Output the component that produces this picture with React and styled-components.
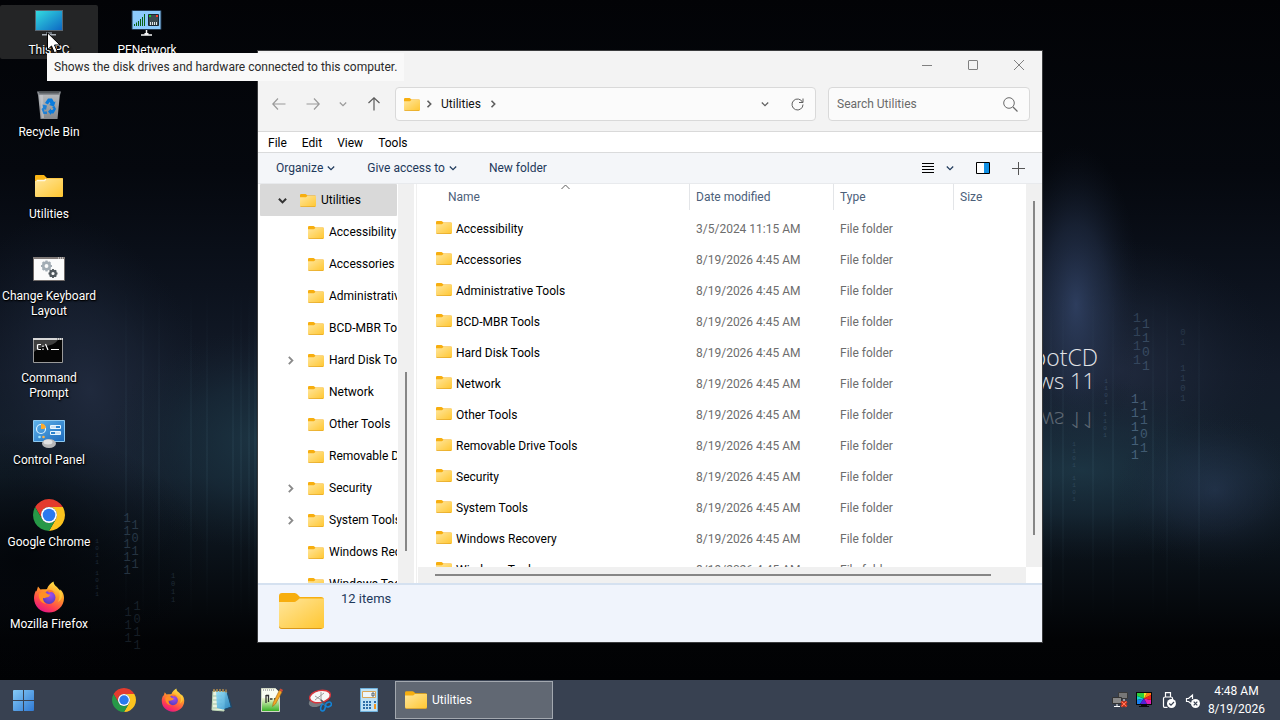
import React from "react";
import styled, { createGlobalStyle } from "styled-components";

const colours = {
    chrome: "#f3f3f3",
    field: "#fbfbfb",
    border: "#d9d9d9",
    command: "#f4f6f9",
    link: "#1e395b",
    heading: "#4c607a",
    muted: "#6d6d6d",
    track: "#f0f0f0",
    thumb: "#868686",
    selected: "#d9d9d9",
    taskbar: "#384151",
};

const GlobalStyle = createGlobalStyle`
    * {
        box-sizing: border-box;
    }
    body {
        margin: 0;
        background: #000;
        font-family: Roboto, "Open Sans", sans-serif;
        font-size: 12px;
        line-height: 16px;
        color: #000;
    }
    button, input {
        font: inherit;
        color: inherit;
    }
    button {
        padding: 0;
        border: 0;
        background: none;
    }
    svg {
        display: block;
        flex: none;
    }
`;

/* ---------- desktop ---------- */

const Screen = styled.div`
    display: flex;
    flex-direction: column;
    height: 100vh;
    overflow: hidden;
`;

const Desktop = styled.main`
    position: relative;
    flex: 1;
    min-height: 0;
`;

const WallpaperSvg = styled.svg`
    position: absolute;
    inset: 0;
    width: 100%;
    height: 100%;
`;

const IconGrid = styled.div`
    position: relative;
    display: grid;
    grid-auto-flow: column;
    grid-template-rows: repeat(8, 82px);
    grid-auto-columns: 98px;
    justify-content: start;
    height: 100%;
    padding-top: 5px;
`;

const Shortcut = styled.button`
    display: flex;
    flex-direction: column;
    align-items: center;
    align-self: start;
    min-height: 54px;
    padding-top: 2px;
    border-radius: 2px;
    background: ${({ $hovered }) => ($hovered ? "#242526" : "none")};
    color: #fff;
    line-height: 15px;
    text-shadow: 1px 1px 2px #000, 0 1px 1px #000;

    svg {
        margin-bottom: 4px;
    }
`;

const Pointer = styled.svg`
    position: absolute;
    top: 32px;
    left: 47px;
`;

const Tooltip = styled.div`
    position: absolute;
    top: 53px;
    left: 47px;
    padding: 6px 7px;
    background: #f9f9f9;
    color: #2b2b2b;
    white-space: nowrap;
`;

/* ---------- explorer window ---------- */

const Window = styled.section`
    position: absolute;
    top: 50px;
    right: 237px;
    bottom: 37px;
    left: 257px;
    display: flex;
    flex-direction: column;
    border: 1px solid #3a3b3d;
    background: #fff;
`;

const TitleBar = styled.header`
    display: flex;
    justify-content: flex-end;
    height: 28px;
    background: ${colours.chrome};
`;

const CaptionButton = styled.button`
    display: flex;
    align-items: center;
    justify-content: center;
    width: 46px;
    height: 28px;
    color: #808080;
`;

const NavBar = styled.div`
    display: flex;
    align-items: center;
    gap: 12px;
    height: 53px;
    padding: 2px 12px 4px;
    border-bottom: 1px solid ${colours.border};
    background: ${colours.chrome};
    color: #9a9a9a;
`;

const NavButtons = styled.div`
    display: flex;
    align-items: center;
    justify-content: space-between;
    width: 113px;
    padding: 0 2px;
`;

const AddressBar = styled.div`
    display: flex;
    flex: 1;
    align-items: center;
    height: 34px;
    padding: 0 11px 0 8px;
    border: 1px solid ${colours.border};
    border-radius: 4px;
    background: ${colours.field};
    color: #5f5f5f;
`;

const Crumbs = styled.div`
    display: flex;
    flex: 1;
    align-items: center;
    gap: 5px;
`;

const Crumb = styled.button`
    padding: 0 3px;
    color: #111;
`;

const AddressActions = styled.div`
    display: flex;
    align-items: center;
    gap: 22px;
`;

const SearchBox = styled.label`
    display: flex;
    align-items: center;
    width: 202px;
    height: 34px;
    padding: 0 11px 0 8px;
    border: 1px solid ${colours.border};
    border-radius: 4px;
    background: ${colours.field};
    color: #6a6a6a;
`;

const SearchInput = styled.input`
    flex: 1;
    min-width: 0;
    padding: 0;
    border: 0;
    outline: 0;
    background: none;

    &::placeholder {
        color: #6a6a6a;
        opacity: 1;
    }
`;

const MenuBar = styled.nav`
    display: flex;
    align-items: center;
    gap: 15px;
    height: 21px;
    padding: 1px 10px 0;
    border-bottom: 1px solid #dadbdc;
`;

const CommandBar = styled.div`
    display: flex;
    align-items: center;
    gap: 32px;
    height: 31px;
    padding: 0 17px 0 18px;
    border-bottom: 1px solid #e8eaed;
    background: ${colours.command};
    color: ${colours.link};
`;

const Command = styled.button`
    display: flex;
    align-items: center;
    gap: 4px;
`;

const ViewCommands = styled.div`
    display: flex;
    align-items: center;
    gap: 22px;
    margin-left: auto;
`;

const ViewMode = styled(Command)`
    gap: 12px;
`;

const Panes = styled.div`
    display: flex;
    flex: 1;
    min-height: 0;
`;

const TreePane = styled.aside`
    display: flex;
    width: 159px;
    border-right: 1px solid #f0f0f0;
    padding-right: 2px;
`;

const Tree = styled.ul`
    flex: 1;
    min-width: 0;
    margin: 0;
    padding: 0 1px 0 2px;
    overflow: hidden;
    list-style: none;
`;

const TreeItem = styled.button`
    display: flex;
    align-items: center;
    gap: 11px;
    width: 100%;
    height: 32px;
    padding-left: ${({ $root }) => ($root ? "16px" : "24px")};
    overflow: hidden;
    border-radius: 1px;
    background: ${({ $root }) => ($root ? colours.selected : "none")};
    color: ${({ $root }) => ($root ? "#333" : "#8a8a8a")};
    white-space: nowrap;
`;

const ChevronSlot = styled.span`
    display: flex;
    justify-content: center;
    flex: none;
    width: 13px;
`;

const TreeLabel = styled.span`
    display: flex;
    align-items: center;
    gap: 5px;
    color: #000;
`;

const VerticalTrack = styled.div`
    position: relative;
    width: 16px;
    background: ${colours.track};
`;

const VerticalThumb = styled.span`
    position: absolute;
    top: ${({ $from }) => $from};
    bottom: ${({ $to }) => $to};
    left: 7px;
    width: 2px;
    background: ${colours.thumb};
`;

const ListPane = styled.div`
    display: grid;
    flex: 1;
    grid-template-columns: 1fr 16px;
    grid-template-rows: 1fr 16px;
    min-width: 0;
`;

const ListView = styled.div`
    position: relative;
    min-height: 0;
    overflow: hidden;
`;

const SortMark = styled.svg`
    position: absolute;
    top: 0;
    left: 144px;
    color: #5f5f5f;
`;

const HorizontalTrack = styled.div`
    display: flex;
    align-items: center;
    margin-left: 1px;
    padding: 0 35px 0 17px;
    background: ${colours.track};
`;

const HorizontalThumb = styled.span`
    flex: 1;
    height: 2px;
    background: ${colours.thumb};
`;

const Table = styled.table`
    width: 100%;
    border-collapse: collapse;
    table-layout: fixed;
`;

const HeadCell = styled.th`
    width: ${({ $width }) => $width};
    height: 29px;
    padding: 0 0 3px;
    color: ${colours.heading};
    font-weight: 400;
    text-align: left;
`;

const HeadLabel = styled.div`
    height: 26px;
    padding: 5px 0 5px ${({ $first }) => ($first ? "31px" : "6px")};
    border-right: 1px solid ${({ $last }) => ($last ? "transparent" : "#e3e5e8")};
`;

const Cell = styled.td`
    height: 31px;
    padding: 0 0 0 6px;
    color: ${colours.muted};
`;

const NameCell = styled(Cell)`
    padding-left: 19px;
    color: #000;
`;

const FileName = styled.span`
    display: flex;
    align-items: center;
    gap: 4px;

    svg {
        margin-bottom: 3px;
    }
`;

const StatusBar = styled.footer`
    display: flex;
    align-items: flex-start;
    gap: 17px;
    height: 59px;
    padding: 6px 21px;
    border-top: 2px solid #d5e1f0;
    background: #f0f4fc;
    color: ${colours.link};
    font-size: 13px;

    svg {
        margin-top: 2px;
    }
`;

/* ---------- taskbar ---------- */

const Taskbar = styled.footer`
    display: flex;
    align-items: center;
    height: 40px;
    background: ${colours.taskbar};
    color: #fff;
`;

const StartButton = styled.button`
    display: flex;
    justify-content: center;
    width: 47px;
    margin-right: 52px;
`;

const PinnedButton = styled.button`
    display: flex;
    justify-content: center;
    width: 49px;
`;

const TaskButton = styled.button`
    display: flex;
    align-items: center;
    gap: 5px;
    width: 158px;
    height: 38px;
    margin-left: 2px;
    padding-left: 9px;
    border: 1px solid #a3a8af;
    background: #616873;
`;

const Tray = styled.div`
    display: flex;
    align-items: center;
    gap: 8px;
    margin-left: auto;
    padding-right: 15px;
`;

const Clock = styled.time`
    line-height: 18px;
    text-align: center;
`;

/* ---------- drawings ---------- */

const Gradient = ({ id, from, to, x2 = 1 }) => (
    <linearGradient id={id} x1="0" y1="0" x2={x2} y2="1">
        <stop offset="0" stopColor={from} />
        <stop offset="1" stopColor={to} />
    </linearGradient>
);

// zero-sized, only holds the gradients shared by every icon on the page
const SharedDefs = styled.svg`
    position: absolute;
`;

const IconDefs = () => (
    <SharedDefs width="0" height="0" aria-hidden="true">
        <defs>
            <Gradient id="folder" from="#ffe69c" to="#ffc630" />
            <Gradient id="screen" from="#33dbe0" to="#0d68c4" />
            <Gradient id="start" from="#86cbf6" to="#2f79d4" />
            <Gradient id="bin" from="#b9bcc0" to="#86898d" x2={0} />
            <Gradient id="panel" from="#5fb4ec" to="#1c69bb" />
            <Gradient id="glass" from="#8ddcf7" to="#2f92cf" />
            <Gradient id="green" from="#f4f9d4" to="#39b327" x2={0} />
            <linearGradient id="fox" x1="0.8" y1="0" x2="0.3" y2="1">
                <stop offset="0" stopColor="#fff44f" />
                <stop offset="0.4" stopColor="#ff9a28" />
                <stop offset="0.75" stopColor="#ff4050" />
                <stop offset="1" stopColor="#e31587" />
            </linearGradient>
            <radialGradient id="globe" cx="0.6" cy="0.3" r="0.8">
                <stop offset="0" stopColor="#a24df0" />
                <stop offset="1" stopColor="#4a3bb8" />
            </radialGradient>
        </defs>
    </SharedDefs>
);

const Icon = ({ width, height = width, box, children }) => (
    <svg width={width} height={height} viewBox={box || `0 0 ${width} ${height}`} fill="none" aria-hidden="true">
        {children}
    </svg>
);

const Folder = ({ width = 16, height = 13 }) => (
    <Icon width={width} height={height} box="0 0 45 36">
        <path d="M0 3a3 3 0 0 1 3-3h12c1.500 0 2.500.5 3.500 1.500L21 4h21a3 3 0 0 1 3 3v6H0z" fill="#f7ae0f" />
        <path d="M0 9h14c2 0 3-.5 4.500-1.800L20.500 5.500H45V33a3 3 0 0 1-3 3H3a3 3 0 0 1-3-3z" fill="url(#folder)" />
        <path d="M0 33a3 3 0 0 0 3 3h39a3 3 0 0 0 3-3v1.500a2 2 0 0 1-3 .5H3a3 3 0 0 1-3-2z" fill="#d9971b" />
    </Icon>
);

const DesktopFolder = () => (
    <Icon width={32}>
        <path d="M2 5a1 1 0 0 1 1-1h8l3 3h15a1 1 0 0 1 1 1v5H2z" fill="#fbb616" />
        <path d="M2 10h9.500L14 7.500h16V25a1 1 0 0 1-1 1H3a1 1 0 0 1-1-1z" fill="url(#folder)" />
        <path d="M3.500 9.500h8L13 8" stroke="#fff7dc" strokeWidth="1.500" />
    </Icon>
);

const ThisPc = () => (
    <Icon width={32}>
        <path d="M13 25h6v2h-6z" fill="#687078" />
        <path d="M9 27h14v1.500H9z" fill="#a8b0b8" />
        <path d="M2 3h28v21H2z" fill="#596672" />
        <path d="M3 4h26v19H3z" fill="url(#screen)" />
    </Icon>
);

const PeNetwork = () => (
    <Icon width={32}>
        <path d="M1 3.500h29v19H1z" fill="#8ccafc" stroke="#213850" />
        <path d="M3.500 19v-2M5.500 19v-3.500M7.500 19v-5M9.500 19v-7M11.500 19v-9M13.500 19V7" stroke="#086010" />
        <path d="M17.500 7.500h10v11h-10z" fill="#3c4a50" stroke="#1b2730" />
        <path d="M18 8h2v2h-2z" fill="#19c62b" />
        <path d="M25 8h2v2h-2z" fill="#ff3927" />
        <path d="M19.500 18v-3M21.500 18v-3M23.500 18v-3M25.500 18v-3" stroke="#dfe4e5" />
        <path d="M15.500 23v4M10 28h11" stroke="#f5f5f5" strokeWidth="1.500" />
        <path d="M13.500 26h4v2h-4z" fill="#f5f5f5" />
    </Icon>
);

const RecycleBin = () => (
    <Icon width={32}>
        <path d="M5 4h22l-2.500 26H7.500z" fill="url(#bin)" />
        <path d="M4 2.500h24l-1 3.500H5z" fill="#898d92" />
        <path d="M5.500 2.500h21.500L25.500 4.500H6.500z" fill="#54585c" />
        <path d="M7 6h3l1 23H8.500z" fill="#c9ccd0" opacity="0.6" />
        <g fill="#0a7bdc">
            <path d="m12 14 3-4.500h4l2 3.500 1.500-.5-1.500 5-5-1.500 1.500-1-1-2-1.500 2.500z" />
            <path d="m9.500 15.500 4.500 1-1 4.500-1.500-1-.5 2.500h3V25h-3.500L8.500 20l1.500-1.500z" opacity="0.85" />
            <path d="m21.500 17 1.500 3-2.500 4.500H18V26l-3-3.500 3-3v1.500h1.500l1-1.500-1.500-1.500z" />
        </g>
    </Icon>
);

const gearTeeth = [0, 45, 90, 135];

const Gear = ({ cx, cy, r, colour }) => (
    <g transform={`translate(${cx} ${cy})`} stroke={colour}>
        <circle r={r * 0.6} strokeWidth={r * 0.5} />
        {gearTeeth.map((angle) => (
            <path
                key={angle}
                transform={`rotate(${angle})`}
                d={`M0 ${-r}v${r * 0.35}M0 ${r}v${-r * 0.35}`}
                strokeWidth={r * 0.4}
            />
        ))}
    </g>
);

const KeyboardLayout = () => (
    <Icon width={32}>
        <path d="M.5 4.500h31v23H.5z" fill="#fbfbfb" stroke="#6f6a68" />
        <path d="M0 4h32v2H0z" fill="#807a78" />
        <path d="M25 5h1m1 0h1m1 0h1" stroke="#eee" />
        <Gear cx={13.5} cy={13} r={5.5} colour="#a3adb5" />
        <Gear cx={20} cy={20.5} r={4.5} colour="#50585e" />
    </Icon>
);

const CommandPrompt = () => (
    <Icon width={32}>
        <path d="M.5 3.500h29v24H.5z" fill="#050505" stroke="#9a9a9a" />
        <path d="M1 5h24c-6 8-16 4-24 12z" fill="#3e3e3e" />
        <path d="M0 3h30v2H0z" fill="#d7d7d7" />
        <path d="M24 4h1m1 0h1m1 0h1" stroke="#555" />
        <path d="M8 9.500H6L4.500 10v4l1.500.5h2M10 10.500v1.500M10 13.500V15M12.500 9l2.500 6M18 14.500h8" stroke="#fff" strokeWidth="1.200" />
    </Icon>
);

const ControlPanel = () => (
    <Icon width={32}>
        <path d="M.5 3.500h31v21H.5z" fill="url(#panel)" stroke="#8fcaf0" />
        <circle cx="8" cy="12" r="4.500" stroke="#d8f0ff" strokeWidth="1.200" />
        <path d="M8 12V6.500a5.500 5.500 0 0 1 5 4l-2 1.500z" fill="#ffab2d" />
        <path d="M17.500 8.500h10v3h-10zM17.500 14.500h10v3h-10z" fill="#2c83cf" stroke="#e8f7ff" />
        <path d="M18 10h5M22 16h5" stroke="#fff" strokeWidth="1.500" />
        <circle cx="6.500" cy="20" r="1.300" fill="#9ee7ff" />
        <circle cx="10.500" cy="20" r="1.300" fill="#ffb44a" />
        <ellipse cx="16" cy="26.500" rx="7" ry="4.500" fill="#b8b8b8" />
        <ellipse cx="15" cy="25" rx="4.500" ry="2.500" fill="#e2e2e2" />
    </Icon>
);

const Chrome = ({ size = 32 }) => (
    <Icon width={size} box="0 0 48 48">
        <path d="M3.220 12A24 24 0 0 1 44.780 12H24a12 12 0 0 0-10.400 18z" fill="#e33b2e" />
        <path d="M44.780 12A24 24 0 0 1 24 48l10.400-18A12 12 0 0 0 24 12z" fill="#fcc31e" />
        <path d="M24 48A24 24 0 0 1 3.220 12L13.600 30a12 12 0 0 0 20.800 0z" fill="#279847" />
        <circle cx="24" cy="24" r="12" fill="#fff" />
        <circle cx="24" cy="24" r="9.500" fill="#2a79ee" />
    </Icon>
);

const Firefox = ({ size = 32 }) => (
    <Icon width={size} box="0 0 32 32">
        <path
            d="M5 5.500 7.500 8.500l1.500-.2C11 8 12 8.500 14 8 15 4.500 18 2 20.500.5c.3 3 1.500 4 3.500 5.500l3 4 .5-1.500C30 11 31 14 31 17c0 8.300-6.700 14.500-15 14.500S1 25.500 1 17c0-3.500 1-5.500 2-7.500l.5 1z"
            fill="url(#fox)"
        />
        <path d="M23 6c4 4 5 9 2 15 5-3 5-8 2-12z" fill="#ffd53d" opacity="0.7" />
        <circle cx="16" cy="16.500" r="6.500" fill="url(#globe)" />
        <path d="M6 12.500c3-2 5-2 7-1 .8 1.500 2 2 4 2 0 2-2 3-4 3-1 .7-2 .8-3 .5 0 3 1 5 3.500 6C8 22 5 18 6 12.500z" fill="#ff8f24" />
        <path d="M14 9c3-1 6 0 8 3-2-1-4-1.500-6-.5z" fill="#ff7a2a" />
    </Icon>
);

const StartLogo = () => (
    <Icon width={21}>
        <path d="M0 1a1 1 0 0 1 1-1h9v10H0zM11 0h9a1 1 0 0 1 1 1v9H11zM0 11h10v10H1a1 1 0 0 1-1-1zM11 11h10v9a1 1 0 0 1-1 1h-9z" fill="url(#start)" />
    </Icon>
);

const Notepad = () => (
    <Icon width={24}>
        <path d="m3 3 12 1-1 19-12-1z" fill="#e9f2df" stroke="#bcd6b4" />
        <path d="M3 8h9M3 12h9M3 16h9M3 20h9" stroke="#9fc3a5" />
        <path d="m6 3 11 1 4 15-8 2.500-6-1.500z" fill="url(#glass)" opacity="0.9" />
        <path d="m17.500 5 4 14-7 2.500" stroke="#1d4a6c" strokeWidth="1.300" />
        <path d="M4 1v3M7 1v3M10 1v3M13 1v3M16 1.500v3" stroke="#b08a4d" strokeWidth="1.500" />
    </Icon>
);

const NotepadPlus = () => (
    <Icon width={24}>
        <path d="M2.500.5h14l4 4v19h-18z" fill="#fafdf2" stroke="#cfd6c4" />
        <path d="M3 10h17v13H3z" fill="url(#green)" />
        <path d="M4 2h1m1 0h1m1 0h1m1 0h1m1 0h1m1 0h1" stroke="#777" />
        <path d="M7 7v8M7 7.500h2.500V14M11 11h2.500M15 11h2.500" stroke="#303030" strokeWidth="1.300" />
        <path d="M20.500 2 23 4l-6.500 12-3 2.500.8-4z" fill="#f5a623" stroke="#9b671a" strokeWidth="0.6" />
        <path d="m20.500 2 1-1.500L24 2l-1 2z" fill="#d64a36" />
    </Icon>
);

const Snipping = () => (
    <Icon width={24}>
        <ellipse cx="9" cy="13.500" rx="8.500" ry="5" transform="rotate(-20 9 13.500)" fill="#777d82" />
        <ellipse cx="12" cy="8.500" rx="10.500" ry="6" transform="rotate(-12 12 8.500)" fill="#f7f7f7" stroke="#d9363c" strokeWidth="1.500" />
        <path d="m7 12 9-7M13 4v9M7 8l8 5" stroke="#9c9c9c" />
        <ellipse cx="15" cy="19.500" rx="2.200" ry="3.500" transform="rotate(15 15 19.500)" stroke="#1483d6" strokeWidth="1.600" />
        <ellipse cx="20.500" cy="16.500" rx="3" ry="2.200" transform="rotate(-25 20.500 16.500)" stroke="#1483d6" strokeWidth="1.600" />
        <path d="m13 12 4 4.500" stroke="#4f5a63" strokeWidth="1.500" />
    </Icon>
);

const Calculator = () => (
    <Icon width={24}>
        <path d="M3.500.5h17v23h-17z" fill="#bfe2f6" stroke="#6fb2de" />
        <path d="M5.500 3.500h13v6h-13z" fill="#eef6fa" stroke="#d9a65a" />
        <path d="M15 5h2v3h-2z" stroke="#31404a" strokeWidth="0.800" />
        <path d="M6 14h9M6 17h9M6 20h9" stroke="#2f6fa8" strokeWidth="2" strokeDasharray="2 1" />
        <path d="M17 13h2v2h-2z" fill="#2f6fa8" />
        <path d="M17 16h2v5h-2z" fill="#f2951f" />
    </Icon>
);

const TrayNetwork = () => (
    <Icon width={16}>
        <path d="M6.500.5h9v6h-9z" fill="#777" stroke="#3a3a3a" />
        <path d="M.5 5.500h9v6h-9z" fill="#888" stroke="#333" />
        <path d="M5 12v2M2 14.500h6M12 7v2" stroke="#fff" />
        <path d="m9.500 9.500 5 5m0-5-5 5" stroke="#d3341c" strokeWidth="3" />
        <path d="m9.500 9.500 5 5m0-5-5 5" stroke="#ff7a5c" strokeWidth="1" />
    </Icon>
);

const TrayDisplay = () => (
    <Icon width={16}>
        <path d="M0 0h16v13H0zM5 13h6v1h2v1H3v-1h2z" fill="#080808" />
        <path d="M8 6.500V1H1v3z" fill="#2fd03a" />
        <path d="M8 6.500 1 4v4z" fill="#11d8c8" />
        <path d="M8 6.500 1 8v4h3z" fill="#1680f0" />
        <path d="M8 6.500 4 12h7z" fill="#5420d8" />
        <path d="m8 6.500 3 5.500h4V8z" fill="#e01cb4" />
        <path d="m8 6.500 7 1.500V3z" fill="#f02020" />
        <path d="m8 6.500 7-3.500V1h-4z" fill="#ff7a14" />
        <path d="m8 6.500 3-5.500H8z" fill="#f0ea20" />
    </Icon>
);

const TrayUsb = () => (
    <Icon width={16}>
        <path d="M5.500 5V.7h5V5M4.500 15.300h3M4.500 15.300a1 1 0 0 1-1-1V6.500A1.500 1.500 0 0 1 5 5h6a1.500 1.500 0 0 1 1.500 1.500V8" stroke="#fff" strokeWidth="1.200" />
        <circle cx="11.500" cy="11.500" r="4.500" fill="#fff" />
        <path d="m9.300 11.500 1.700 1.700 3-3.200" stroke="#384151" strokeWidth="1.200" />
    </Icon>
);

const TrayVolume = () => (
    <Icon width={16}>
        <path d="M7 11.500 4.500 9.500H2.500v-3h2L8.500 3v4" stroke="#fff" strokeWidth="1.200" />
        <circle cx="11.500" cy="11.500" r="4.500" fill="#fff" />
        <path d="m9.700 9.700 3.600 3.600m0-3.600-3.600 3.600" stroke="#384151" strokeWidth="1.200" />
    </Icon>
);

const Chevron = ({ size = 8, right, width = 1.2 }) => (
    <Icon width={size} box="0 0 8 8">
        <path d={right ? "m2.500.800 3.200 3.200-3.200 3.200" : "M.8 2.500 4 5.700l3.200-3.200"} stroke="currentColor" strokeWidth={width} />
    </Icon>
);

const Arrow = ({ angle, colour = "currentColor" }) => (
    <Icon width={14}>
        <path d="M13.500 7H1M6 1.500.8 7 6 12.500" stroke={colour} strokeWidth="1.200" transform={`rotate(${angle} 7 7)`} />
    </Icon>
);

/* ---------- wallpaper ---------- */

// falling digits: x, first baseline, font size, opacity, digits
const rain = [
    { x: 1137, y: 322, size: 13, opacity: 0.25, digits: "1111" },
    { x: 1146, y: 328, size: 13, opacity: 0.3, digits: "1101" },
    { x: 1135, y: 403, size: 13, opacity: 0.45, digits: "11111" },
    { x: 1144, y: 410, size: 13, opacity: 0.4, digits: "1101" },
    { x: 1183, y: 335, size: 9, opacity: 0.16, digits: "01" },
    { x: 1183, y: 371, size: 9, opacity: 0.2, digits: "1101" },
    { x: 1106, y: 383, size: 6, opacity: 0.25, digits: "1101" },
    { x: 1105, y: 416, size: 6, opacity: 0.25, digits: "1101" },
    { x: 1074, y: 446, size: 6, opacity: 0.2, digits: "1101" },
    { x: 1074, y: 480, size: 6, opacity: 0.2, digits: "1101" },
    { x: 127, y: 522, size: 12, opacity: 0.26, digits: "11111" },
    { x: 135, y: 529, size: 12, opacity: 0.26, digits: "1011" },
    { x: 128, y: 616, size: 12, opacity: 0.16, digits: "111" },
    { x: 137, y: 610, size: 12, opacity: 0.16, digits: "1011" },
    { x: 97, y: 543, size: 6, opacity: 0.2, digits: "1011" },
    { x: 97, y: 575, size: 6, opacity: 0.2, digits: "1011" },
    { x: 173, y: 578, size: 7, opacity: 0.2, digits: "1011" },
];

const streaks = [125, 142, 158, 190, 206, 232, 240, 248, 254, 1050, 1062, 1092, 1112, 1152, 1166, 1198];

const Wallpaper = () => (
    <WallpaperSvg viewBox="0 0 1280 680" preserveAspectRatio="none" aria-hidden="true">
        <defs>
            <linearGradient id="night" x1="0" y1="0" x2="0" y2="1">
                <stop offset="0" stopColor="#020306" />
                <stop offset="0.25" stopColor="#05080e" />
                <stop offset="0.42" stopColor="#0c121d" />
                <stop offset="0.55" stopColor="#131b29" />
                <stop offset="0.7" stopColor="#13202c" />
                <stop offset="0.82" stopColor="#0a1118" />
                <stop offset="0.94" stopColor="#020305" />
                <stop offset="1" stopColor="#010204" />
            </linearGradient>
            <radialGradient id="glowNavy">
                <stop offset="0" stopColor="#34466b" stopOpacity="0.8" />
                <stop offset="0.5" stopColor="#26344f" stopOpacity="0.5" />
                <stop offset="1" stopColor="#131b29" stopOpacity="0" />
            </radialGradient>
            <radialGradient id="glowTeal">
                <stop offset="0" stopColor="#1f3b4a" stopOpacity="0.75" />
                <stop offset="0.5" stopColor="#1a303f" stopOpacity="0.5" />
                <stop offset="1" stopColor="#13202c" stopOpacity="0" />
            </radialGradient>
            <radialGradient id="glowSlate">
                <stop offset="0" stopColor="#232d42" stopOpacity="0.8" />
                <stop offset="0.5" stopColor="#1c2638" stopOpacity="0.5" />
                <stop offset="1" stopColor="#131b29" stopOpacity="0" />
            </radialGradient>
            <radialGradient id="shade">
                <stop offset="0" stopColor="#020408" stopOpacity="0.85" />
                <stop offset="1" stopColor="#020408" stopOpacity="0" />
            </radialGradient>
            <linearGradient id="streak" x1="0" y1="0" x2="0" y2="1">
                <stop offset="0" stopColor="#5d8ca0" stopOpacity="0" />
                <stop offset="0.5" stopColor="#5d8ca0" stopOpacity="0.08" />
                <stop offset="1" stopColor="#5d8ca0" stopOpacity="0" />
            </linearGradient>
        </defs>
        <rect width="1280" height="680" fill="url(#night)" />
        <ellipse cx="90" cy="390" rx="120" ry="180" fill="url(#glowSlate)" transform="rotate(-20 90 390)" />
        <ellipse cx="260" cy="440" rx="150" ry="110" fill="url(#glowTeal)" />
        <ellipse cx="20" cy="560" rx="190" ry="130" fill="url(#shade)" />
        <ellipse cx="1120" cy="370" rx="160" ry="130" fill="url(#glowSlate)" />
        <ellipse cx="1076" cy="305" rx="65" ry="160" fill="url(#glowNavy)" />
        <ellipse cx="1080" cy="470" rx="220" ry="90" fill="url(#glowTeal)" />
        <ellipse cx="1215" cy="490" rx="100" ry="80" fill="url(#glowNavy)" opacity="0.5" />
        {streaks.map((x) => (
            <rect key={x} x={x} y="290" width="2" height="330" fill="url(#streak)" />
        ))}
        <g fontFamily='"Open Sans", sans-serif' fontWeight="300" textAnchor="end" fill="#e2e4e8">
            <text x="1098" y="366" fontSize="23">BootCD</text>
            <text x="1095" y="389" fontSize="22">Windows 11</text>
            <text transform="translate(1095 412) scale(1 -1)" fontSize="22" opacity="0.35">Windows 11</text>
        </g>
        <g fontFamily='"Liberation Mono", monospace' textAnchor="middle" fill="#7ba2c4">
            {rain.map(({ x, y, size, opacity, digits }) => (
                <text key={`${x}-${y}`} fontSize={size} opacity={opacity}>
                    {digits.split("").map((digit, i) => (
                        <tspan key={i} x={x} y={y + i * (size + 1)}>
                            {digit}
                        </tspan>
                    ))}
                </text>
            ))}
        </g>
    </WallpaperSvg>
);

/* ---------- content ---------- */

const shortcuts = [
    { name: "This PC", icon: <ThisPc />, hovered: true },
    { name: "Recycle Bin", icon: <RecycleBin /> },
    { name: "Utilities", icon: <DesktopFolder /> },
    { name: "Change Keyboard Layout", icon: <KeyboardLayout /> },
    { name: "Command Prompt", icon: <CommandPrompt /> },
    { name: "Control Panel", icon: <ControlPanel /> },
    { name: "Google Chrome", icon: <Chrome /> },
    { name: "Mozilla Firefox", icon: <Firefox /> },
    { name: "PENetwork", icon: <PeNetwork /> },
];

const folders = [
    { name: "Accessibility", date: "3/5/2024 11:15 AM" },
    { name: "Accessories" },
    { name: "Administrative Tools" },
    { name: "BCD-MBR Tools" },
    { name: "Hard Disk Tools", nested: true },
    { name: "Network" },
    { name: "Other Tools" },
    { name: "Removable Drive Tools" },
    { name: "Security", nested: true },
    { name: "System Tools", nested: true },
    { name: "Windows Recovery" },
    { name: "Windows Tools" },
];

const pinned = [
    { name: "Google Chrome", icon: <Chrome size={24} /> },
    { name: "Mozilla Firefox", icon: <Firefox size={24} /> },
    { name: "Notepad", icon: <Notepad /> },
    { name: "Notepad++", icon: <NotepadPlus /> },
    { name: "Snipping Tool", icon: <Snipping /> },
    { name: "Calculator", icon: <Calculator /> },
];

const Explorer = () => (
    <Window aria-label="Utilities">
        <TitleBar>
            <CaptionButton aria-label="Minimize">
                <Icon width={10}>
                    <path d="M0 5.500h10" stroke="currentColor" />
                </Icon>
            </CaptionButton>
            <CaptionButton aria-label="Maximize">
                <Icon width={10}>
                    <rect x="0.500" y="0.500" width="9" height="9" rx="0.500" stroke="currentColor" />
                </Icon>
            </CaptionButton>
            <CaptionButton aria-label="Close">
                <Icon width={10}>
                    <path d="m0 0 10 10M10 0 0 10" stroke="currentColor" />
                </Icon>
            </CaptionButton>
        </TitleBar>
        <NavBar>
            <NavButtons>
                <button aria-label="Back">
                    <Arrow angle={0} />
                </button>
                <button aria-label="Forward">
                    <Arrow angle={180} />
                </button>
                <button aria-label="Recent locations">
                    <Chevron />
                </button>
                <button aria-label="Up">
                    <Arrow angle={90} colour="#5a5a5a" />
                </button>
            </NavButtons>
            <AddressBar>
                <Crumbs>
                    <Folder />
                    <Chevron right width={1.6} />
                    <Crumb>Utilities</Crumb>
                    <Chevron right width={1.6} />
                </Crumbs>
                <AddressActions>
                    <button aria-label="Previous locations">
                        <Chevron />
                    </button>
                    <button aria-label="Refresh">
                        <Icon width={13}>
                            <path d="M11.500 4.200A5.500 5.500 0 1 0 12 6.500M12 .5v4H8" stroke="currentColor" />
                        </Icon>
                    </button>
                </AddressActions>
            </AddressBar>
            <SearchBox>
                <SearchInput type="text" placeholder="Search Utilities" aria-label="Search Utilities" />
                <Icon width={15}>
                    <circle cx="6" cy="6" r="5.300" stroke="currentColor" />
                    <path d="m10 10 4.500 4.500" stroke="currentColor" strokeWidth="1.200" />
                </Icon>
            </SearchBox>
        </NavBar>
        <MenuBar>
            {["File", "Edit", "View", "Tools"].map((menu) => (
                <button key={menu}>{menu}</button>
            ))}
        </MenuBar>
        <CommandBar>
            <Command>
                Organize <Chevron />
            </Command>
            <Command>
                Give access to <Chevron />
            </Command>
            <Command>New folder</Command>
            <ViewCommands>
                <ViewMode aria-label="Change your view">
                    <Icon width={12} height={11}>
                        <path d="M0 .5h12M0 3.500h12M0 6.500h12M0 9.500h12" stroke="#000" />
                    </Icon>
                    <Chevron />
                </ViewMode>
                <button aria-label="Preview pane">
                    <Icon width={14} height={12}>
                        <path d="M.5.500h13v11H.5z" fill="#fff" stroke="#000" />
                        <path d="M8 1h5v10H8z" fill="#1090e4" />
                    </Icon>
                </button>
                <button aria-label="New item">
                    <Icon width={13}>
                        <path d="M6.500 0v13M0 6.500h13" stroke="#555" />
                    </Icon>
                </button>
            </ViewCommands>
        </CommandBar>
        <Panes>
            <TreePane>
                <Tree>
                    <li>
                        <TreeItem $root>
                            <ChevronSlot>
                                <Chevron size={9} width={1.8} />
                            </ChevronSlot>
                            <TreeLabel>
                                <Folder />
                                Utilities
                            </TreeLabel>
                        </TreeItem>
                    </li>
                    {folders.map(({ name, nested }) => (
                        <li key={name}>
                            <TreeItem>
                                <ChevronSlot>{nested && <Chevron right size={9} width={1.6} />}</ChevronSlot>
                                <TreeLabel>
                                    <Folder />
                                    {name}
                                </TreeLabel>
                            </TreeItem>
                        </li>
                    ))}
                </Tree>
                <VerticalTrack>
                    <VerticalThumb $from="47%" $to="8%" />
                </VerticalTrack>
            </TreePane>
            <ListPane>
                <ListView>
                    <SortMark width="9" height="6" viewBox="0 0 9 6" fill="none">
                        <path d="M.5 5 4.500 1l4 4" stroke="currentColor" />
                    </SortMark>
                    <Table>
                        <thead>
                            <tr>
                                <HeadCell $width="273px">
                                    <HeadLabel $first>Name</HeadLabel>
                                </HeadCell>
                                <HeadCell $width="144px">
                                    <HeadLabel>Date modified</HeadLabel>
                                </HeadCell>
                                <HeadCell $width="120px">
                                    <HeadLabel>Type</HeadLabel>
                                </HeadCell>
                                <HeadCell>
                                    <HeadLabel $last>Size</HeadLabel>
                                </HeadCell>
                            </tr>
                        </thead>
                        <tbody>
                            {folders.map(({ name, date = "8/19/2026 4:45 AM" }) => (
                                <tr key={name}>
                                    <NameCell>
                                        <FileName>
                                            <Folder />
                                            {name}
                                        </FileName>
                                    </NameCell>
                                    <Cell>{date}</Cell>
                                    <Cell>File folder</Cell>
                                    <Cell />
                                </tr>
                            ))}
                        </tbody>
                    </Table>
                </ListView>
                <VerticalTrack>
                    <VerticalThumb $from="17px" $to="32px" />
                </VerticalTrack>
                <HorizontalTrack>
                    <HorizontalThumb />
                </HorizontalTrack>
            </ListPane>
        </Panes>
        <StatusBar>
            <Folder width={45} height={36} />
            <span>12 items</span>
        </StatusBar>
    </Window>
);

export default function App() {
    return (
        <Screen>
            <GlobalStyle />
            <IconDefs />
            <Desktop>
                <Wallpaper />
                <IconGrid>
                    {shortcuts.map(({ name, icon, hovered }) => (
                        <Shortcut key={name} $hovered={hovered}>
                            {icon}
                            {name}
                        </Shortcut>
                    ))}
                </IconGrid>
                <Explorer />
                <Pointer width="14" height="22" viewBox="0 0 14 22" aria-hidden="true">
                    <path d="M.5.800v17l4-3.800 2.800 6.800 3-1.300-2.800-6.500H13z" fill="#fff" stroke="#000" />
                </Pointer>
                <Tooltip role="tooltip">Shows the disk drives and hardware connected to this computer.</Tooltip>
            </Desktop>
            <Taskbar>
                <StartButton aria-label="Start">
                    <StartLogo />
                </StartButton>
                {pinned.map(({ name, icon }) => (
                    <PinnedButton key={name} aria-label={name}>
                        {icon}
                    </PinnedButton>
                ))}
                <TaskButton>
                    <Folder width={22} height={18} />
                    Utilities
                </TaskButton>
                <Tray>
                    <TrayNetwork />
                    <TrayDisplay />
                    <TrayUsb />
                    <TrayVolume />
                    <Clock>
                        4:48 AM
                        <br />
                        8/19/2026
                    </Clock>
                </Tray>
            </Taskbar>
        </Screen>
    );
}
